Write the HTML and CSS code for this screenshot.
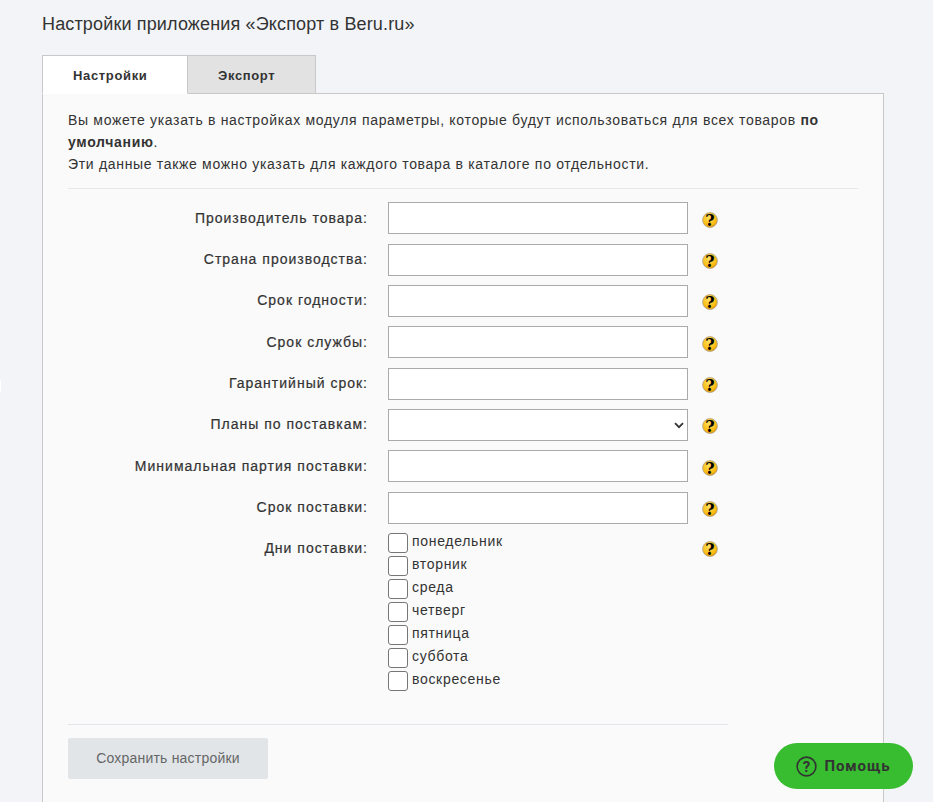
FILE: index.html
```html
<!doctype html>
<html>
  <head>
    <meta charset="UTF-8" />
    <title>Настройки приложения</title>
    <link rel="stylesheet" href="styles.css">
  </head>
  <body>
    <svg class="defs" width="0" height="0">
      <defs>
        <radialGradient id="hint-fill" cx="45%" cy="35%" r="70%">
          <stop offset="0%" stop-color="#ffe060" />
          <stop offset="70%" stop-color="#fbbb10" />
          <stop offset="100%" stop-color="#d98f06" />
        </radialGradient>
        <symbol id="hint" viewBox="0 0 16 16">
          <circle cx="8" cy="8" r="7.4" fill="url(#hint-fill)" stroke="#a9a08a" stroke-width="0.8" />
          <text x="8" y="13.8" text-anchor="middle" class="hint-mark">?</text>
        </symbol>
      </defs>
    </svg>

    <div class="page">
      <h1 class="page-title">Настройки приложения «Экспорт в Beru.ru»</h1>

      <div class="tabs">
        <div class="tab tab-active">Настройки</div>
        <div class="tab">Экспорт</div>
      </div>

      <div class="panel">
        <p class="intro">
          Вы можете указать в настройках модуля параметры, которые будут использоваться для всех товаров <b>по умолчанию</b>.<br>
          Эти данные также можно указать для каждого товара в каталоге по отдельности.
        </p>
        <div class="divider"></div>

        <form class="settings">
          <div class="row">
            <label class="row-label">Производитель товара:</label>
            <input class="field" type="text">
            <svg class="hint"><use href="#hint" /></svg>
          </div>
          <div class="row">
            <label class="row-label">Страна производства:</label>
            <input class="field" type="text">
            <svg class="hint"><use href="#hint" /></svg>
          </div>
          <div class="row">
            <label class="row-label">Срок годности:</label>
            <input class="field" type="text">
            <svg class="hint"><use href="#hint" /></svg>
          </div>
          <div class="row">
            <label class="row-label">Срок службы:</label>
            <input class="field" type="text">
            <svg class="hint"><use href="#hint" /></svg>
          </div>
          <div class="row">
            <label class="row-label">Гарантийный срок:</label>
            <input class="field" type="text">
            <svg class="hint"><use href="#hint" /></svg>
          </div>
          <div class="row">
            <label class="row-label">Планы по поставкам:</label>
            <div class="select-wrap">
              <select class="field field-select"><option></option></select>
              <svg class="chevron" viewBox="0 0 10 7" width="10" height="7">
                <path d="M1 1.2 L5 5.2 L9 1.2" fill="none" stroke="#333" stroke-width="1.8" />
              </svg>
            </div>
            <svg class="hint"><use href="#hint" /></svg>
          </div>
          <div class="row">
            <label class="row-label">Минимальная партия поставки:</label>
            <input class="field" type="text">
            <svg class="hint"><use href="#hint" /></svg>
          </div>
          <div class="row">
            <label class="row-label">Срок поставки:</label>
            <input class="field" type="text">
            <svg class="hint"><use href="#hint" /></svg>
          </div>
          <div class="row row-days">
            <label class="row-label">Дни поставки:</label>
            <div class="days">
              <label class="day"><span class="check"></span>понедельник</label>
              <label class="day"><span class="check"></span>вторник</label>
              <label class="day"><span class="check"></span>среда</label>
              <label class="day"><span class="check"></span>четверг</label>
              <label class="day"><span class="check"></span>пятница</label>
              <label class="day"><span class="check"></span>суббота</label>
              <label class="day"><span class="check"></span>воскресенье</label>
            </div>
            <svg class="hint"><use href="#hint" /></svg>
          </div>

          <div class="form-footer">
            <button class="save-btn" type="button">Сохранить настройки</button>
          </div>
        </form>
      </div>
    </div>

    <span class="edge-mark"></span>

    <button class="help-btn" type="button">
      <svg width="21" height="21" viewBox="0 0 21 21">
        <circle cx="10.5" cy="10.5" r="9.4" fill="none" stroke="#333" stroke-width="1.6" />
        <text x="10.5" y="15.6" text-anchor="middle" class="help-mark">?</text>
      </svg>
      Помощь
    </button>
  </body>
</html>
```

FILE: styles.css
```css
html {
  overflow: hidden;
}

body {
  font-family: "Liberation Sans", Arial, sans-serif;
  font-size: 14px;
  letter-spacing: 0.68px;
  margin: 0;
  background: #f2f4f7;
  color: #333;
}

.defs {
  position: absolute;
}

.page {
  padding: 14px 49px 0 42px;
}

.page-title {
  margin: 0 0 21px;
  font-size: 18px;
  font-weight: normal;
  line-height: 20px;
  letter-spacing: 0.15px;
}

.tabs {
  display: flex;
  height: 39px;
  margin-bottom: -1px;
  position: relative;
}

.tab {
  box-sizing: border-box;
  width: 128px;
  height: 39px;
  padding-left: 30px;
  border: 1px solid #c8c8c8;
  border-left: 0;
  background: #e2e2e2;
  font-size: 13px;
  font-weight: bold;
  letter-spacing: 0.65px;
  line-height: 40px;
}

.tab-active {
  width: 146px;
  border-left: 1px solid #c8c8c8;
  border-right-color: #c8c8c8;
  border-bottom-color: #fff;
  background: #fff;
}

.panel {
  border: 1px solid #c8c8c8;
  background: #fafafa;
  padding: 15px 25px 0;
  min-height: 720px;
}

.intro {
  margin: 0;
  line-height: 22px;
}

.divider {
  margin: 13px 0 13.33px;
  border-top: 1px solid #e6e8ea;
}

.row {
  display: flex;
  align-items: center;
  height: 32px;
  margin-bottom: 9.33px;
}

.row-label {
  width: 300px;
  margin-right: 20px;
  margin-bottom: 1px;
  text-align: right;
  letter-spacing: 1px;
  -webkit-text-stroke: 0.2px #333;
  color: #333;
}

.field {
  box-sizing: border-box;
  display: block;
  width: 300px;
  height: 32px;
  margin: 0;
  border: 1px solid #aaa;
  border-radius: 0;
  background: #fff;
  outline: 0;
}

.field-select {
  appearance: none;
}

.select-wrap {
  position: relative;
  width: 300px;
  height: 32px;
}

.chevron {
  position: absolute;
  top: 13px;
  right: 4px;
}

.hint {
  flex: none;
  width: 16px;
  height: 16px;
  margin-top: 3px;
  margin-left: 14px;
}

.hint-mark {
  font-family: "DejaVu Serif", serif;
  font-size: 16px;
  font-weight: bold;
  letter-spacing: 0;
  fill: #000;
}

.row-days {
  align-items: flex-start;
  height: auto;
  margin-bottom: 0;
}

.row-days .row-label {
  line-height: 30px;
}

.row-days .hint {
  margin-top: 8px;
}

.days {
  width: 300px;
}

.day {
  display: flex;
  align-items: flex-start;
  height: 23px;
  line-height: 17px;
}

.check {
  box-sizing: border-box;
  flex: none;
  width: 20px;
  height: 20px;
  margin-right: 4px;
  border: 1px solid #767676;
  border-radius: 3px;
  background: #fff;
}

.form-footer {
  width: 660px;
  margin-top: 30px;
  padding-top: 13px;
  border-top: 1px solid #e2e6ea;
}

.save-btn {
  display: block;
  width: 200px;
  height: 41px;
  border: 0;
  border-radius: 2px;
  background: #e1e5e8;
  color: #666;
  font-family: inherit;
  font-size: 14px;
  letter-spacing: 0.2px;
}

.edge-mark {
  position: fixed;
  left: 0;
  top: 380px;
  width: 1px;
  height: 12px;
  background: #fff;
}

.help-btn {
  position: fixed;
  left: 774px;
  top: 743px;
  display: flex;
  align-items: center;
  justify-content: center;
  gap: 7px;
  width: 139px;
  height: 46px;
  padding: 0;
  border: 0;
  border-radius: 23px;
  background: #37bd2f;
  color: #333;
  font-family: Roboto, sans-serif;
  font-size: 15px;
  font-weight: bold;
  letter-spacing: 0.9px;
}

.help-mark {
  font-family: Roboto, sans-serif;
  font-size: 15px;
  font-weight: bold;
  letter-spacing: 0;
  fill: #333;
}
```
